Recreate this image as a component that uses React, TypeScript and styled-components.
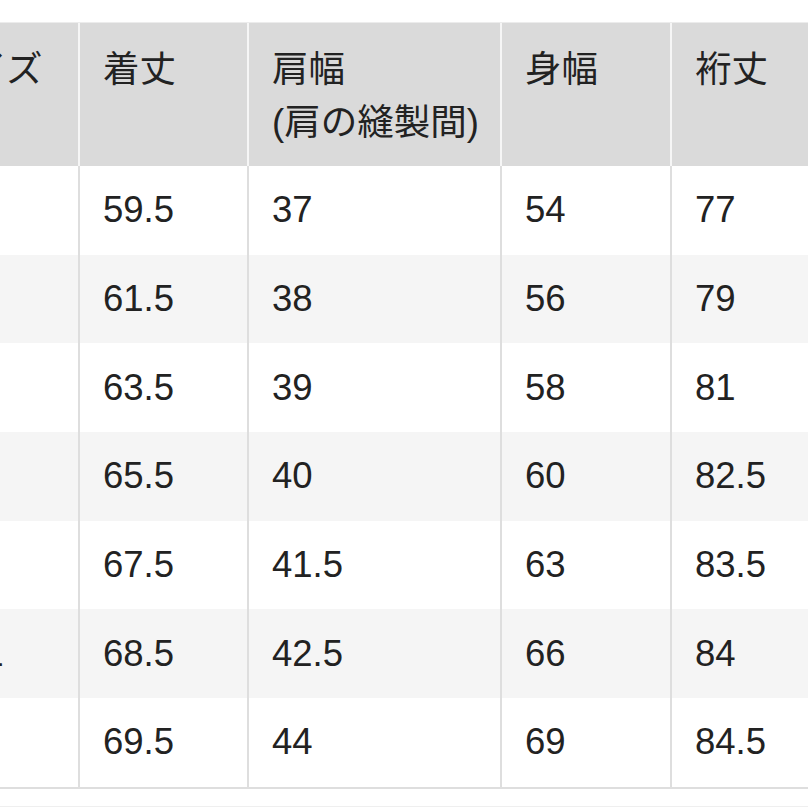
import React from "react";
import styled, { createGlobalStyle } from "styled-components";

const Global = createGlobalStyle`
  html, body { margin: 0; padding: 0; background: #ffffff; }
  body { overflow: hidden; width: 808px; height: 808px; }
`;

const Page = styled.div`
  width: 808px;
  height: 808px;
  overflow: hidden;
  background: #ffffff;
  padding-top: 22px;
  box-sizing: border-box;
`;

const Frame = styled.div`
  margin-left: -89px;
  width: 940px;
  border-top: 1px solid #ececec;
  border-bottom: 1px solid #efefef;
  padding-bottom: 17px;
`;

const Table = styled.table`
  border-collapse: separate;
  border-spacing: 0;
  table-layout: fixed;
  width: 930px;
  font-family: "Liberation Sans", "Noto Sans CJK JP", sans-serif;
  font-size: 36.5px;
  color: #222222;
  border-bottom: 2px solid #dedede;
`;

const HeadCell = styled.th<{ $w: number }>`
  width: ${(p) => p.$w}px;
  box-sizing: border-box;
  height: 143px;
  background: #dadada;
  border-right: 2px solid #f6f6f6;
  text-align: left;
  vertical-align: top;
  font-weight: 400;
  line-height: 53px;
  padding: 20px 0 0 23px;
  white-space: nowrap;
`;

const Row = styled.tr<{ $alt: boolean }>`
  height: 88.7px;
  background: ${(p) => (p.$alt ? "#f5f5f5" : "#ffffff")};
`;

const Cell = styled.td`
  box-sizing: border-box;
  border-right: 2px solid #dedede;
  padding: 0 0 0 23px;
  vertical-align: middle;
  white-space: nowrap;
  line-height: 40px;
`;

const widths = [169, 169, 253, 170, 169];

const rows: string[][] = [
  ["XS", "59.5", "37", "54", "77"],
  ["S", "61.5", "38", "56", "79"],
  ["M", "63.5", "39", "58", "81"],
  ["L", "65.5", "40", "60", "82.5"],
  ["XL", "67.5", "41.5", "63", "83.5"],
  ["XXL", "68.5", "42.5", "66", "84"],
  ["3XL", "69.5", "44", "69", "84.5"],
];

export default function App() {
  return (
    <>
      <Global />
      <Page>
        <Frame>
          <Table>
            <thead>
              <tr>
                <HeadCell $w={widths[0]}>サイズ</HeadCell>
                <HeadCell $w={widths[1]}>着丈</HeadCell>
                <HeadCell $w={widths[2]}>
                  肩幅
                  <br />
                  (肩の縫製間)
                </HeadCell>
                <HeadCell $w={widths[3]}>身幅</HeadCell>
                <HeadCell $w={widths[4]}>裄丈</HeadCell>
              </tr>
            </thead>
            <tbody>
              {rows.map((r, i) => (
                <Row key={r[0]} $alt={i % 2 === 1}>
                  {r.map((v, j) => (
                    <Cell key={j}>{v}</Cell>
                  ))}
                </Row>
              ))}
            </tbody>
          </Table>
        </Frame>
      </Page>
    </>
  );
}
